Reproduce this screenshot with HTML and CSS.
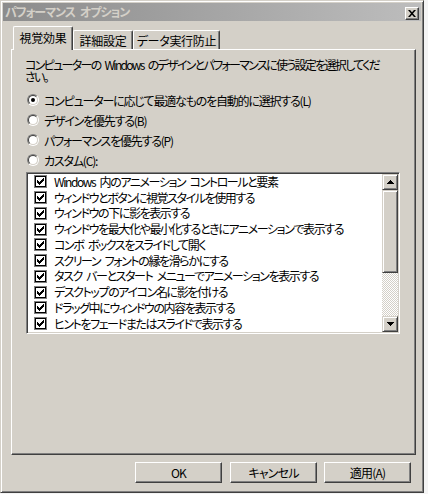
FILE: index.html
```html
<!DOCTYPE html>
<html lang="ja">
<head>
<meta charset="utf-8">
<title>パフォーマンス オプション</title>
<link rel="stylesheet" href="styles.css">
</head>
<body>
<div class="dialog">
  <div class="titlebar">
    <span class="title">パフォーマンス オプション</span>
    <span class="close">
      <svg width="8" height="7" viewBox="0 0 8 7"><path d="M0 0h2l2 2.2L6 0h2L5 3.5 8 7H6L4 4.8 2 7H0l3-3.5z" fill="#000"/></svg>
    </span>
  </div>
  <div class="content">
    <div class="tabs">
      <div class="tab sel">視覚効果</div>
      <div class="tab t2">詳細設定</div>
      <div class="tab t3">データ実行防止</div>
    </div>
    <div class="panel">
      <p class="desc">コンピューターの Windows のデザインとパフォーマンスに使う設定を選択してくだ<br>さい。</p>
      <div class="radios">
        <div class="rrow"><span class="radio"><i><b></b></i></span><span>コンピューターに応じて最適なものを自動的に選択する(L)</span></div>
        <div class="rrow"><span class="radio"><i></i></span><span>デザインを優先する(B)</span></div>
        <div class="rrow"><span class="radio"><i></i></span><span>パフォーマンスを優先する(P)</span></div>
        <div class="rrow"><span class="radio"><i></i></span><span>カスタム(C):</span></div>
      </div>
      <div class="listbox">
        <div class="items">
          <div class="item"><span class="cb"><svg width="7" height="7" viewBox="0 0 7 7"><path d="M0 2h1v3H0zM1 3h1v3H1zM2 4h1v3H2zM3 3h1v3H3zM4 2h1v3H4zM5 1h1v3H5zM6 0h1v3H6z" fill="#000"/></svg></span><span>Windows 内のアニメーション コントロールと要素</span></div>
          <div class="item"><span class="cb"><svg width="7" height="7" viewBox="0 0 7 7"><path d="M0 2h1v3H0zM1 3h1v3H1zM2 4h1v3H2zM3 3h1v3H3zM4 2h1v3H4zM5 1h1v3H5zM6 0h1v3H6z" fill="#000"/></svg></span><span>ウィンドウとボタンに視覚スタイルを使用する</span></div>
          <div class="item"><span class="cb"><svg width="7" height="7" viewBox="0 0 7 7"><path d="M0 2h1v3H0zM1 3h1v3H1zM2 4h1v3H2zM3 3h1v3H3zM4 2h1v3H4zM5 1h1v3H5zM6 0h1v3H6z" fill="#000"/></svg></span><span>ウィンドウの下に影を表示する</span></div>
          <div class="item"><span class="cb"><svg width="7" height="7" viewBox="0 0 7 7"><path d="M0 2h1v3H0zM1 3h1v3H1zM2 4h1v3H2zM3 3h1v3H3zM4 2h1v3H4zM5 1h1v3H5zM6 0h1v3H6z" fill="#000"/></svg></span><span>ウィンドウを最大化や最小化するときにアニメーションで表示する</span></div>
          <div class="item"><span class="cb"><svg width="7" height="7" viewBox="0 0 7 7"><path d="M0 2h1v3H0zM1 3h1v3H1zM2 4h1v3H2zM3 3h1v3H3zM4 2h1v3H4zM5 1h1v3H5zM6 0h1v3H6z" fill="#000"/></svg></span><span>コンボ ボックスをスライドして開く</span></div>
          <div class="item"><span class="cb"><svg width="7" height="7" viewBox="0 0 7 7"><path d="M0 2h1v3H0zM1 3h1v3H1zM2 4h1v3H2zM3 3h1v3H3zM4 2h1v3H4zM5 1h1v3H5zM6 0h1v3H6z" fill="#000"/></svg></span><span>スクリーン フォントの縁を滑らかにする</span></div>
          <div class="item"><span class="cb"><svg width="7" height="7" viewBox="0 0 7 7"><path d="M0 2h1v3H0zM1 3h1v3H1zM2 4h1v3H2zM3 3h1v3H3zM4 2h1v3H4zM5 1h1v3H5zM6 0h1v3H6z" fill="#000"/></svg></span><span>タスク バーとスタート メニューでアニメーションを表示する</span></div>
          <div class="item"><span class="cb"><svg width="7" height="7" viewBox="0 0 7 7"><path d="M0 2h1v3H0zM1 3h1v3H1zM2 4h1v3H2zM3 3h1v3H3zM4 2h1v3H4zM5 1h1v3H5zM6 0h1v3H6z" fill="#000"/></svg></span><span>デスクトップのアイコン名に影を付ける</span></div>
          <div class="item"><span class="cb"><svg width="7" height="7" viewBox="0 0 7 7"><path d="M0 2h1v3H0zM1 3h1v3H1zM2 4h1v3H2zM3 3h1v3H3zM4 2h1v3H4zM5 1h1v3H5zM6 0h1v3H6z" fill="#000"/></svg></span><span>ドラッグ中にウィンドウの内容を表示する</span></div>
          <div class="item"><span class="cb"><svg width="7" height="7" viewBox="0 0 7 7"><path d="M0 2h1v3H0zM1 3h1v3H1zM2 4h1v3H2zM3 3h1v3H3zM4 2h1v3H4zM5 1h1v3H5zM6 0h1v3H6z" fill="#000"/></svg></span><span>ヒントをフェードまたはスライドで表示する</span></div>
        </div>
        <div class="scrollbar">
          <div class="sbtn"><svg width="7" height="4" viewBox="0 0 7 4"><path d="M3 0h1v1h1v1h1v1h1v1H0V3h1V2h1V1h1z" fill="#000"/></svg></div>
          <div class="thumb"></div>
          <div class="track"></div>
          <div class="sbtn"><svg width="7" height="4" viewBox="0 0 7 4"><path d="M0 0h7v1H6v1H5v1H4v1H3V3H2V2H1V1H0z" fill="#000"/></svg></div>
        </div>
      </div>
    </div>
    <div class="buttons">
      <div class="btn ok">OK</div>
      <div class="btn">キャンセル</div>
      <div class="btn">適用(A)</div>
    </div>
  </div>
</div>
</body>
</html>
```

FILE: styles.css
```css
html, body {
  margin: 0;
  padding: 0;
}
body {
  width: 428px;
  height: 494px;
  background: #f4f4f4;
  font-family: "Noto Sans CJK JP", sans-serif;
  font-size: 12px;
  color: #000;
  overflow: hidden;
}
.dialog {
  width: 424px;
  height: 493px;
  box-sizing: border-box;
  background: #d4d0c8;
  border: 1px solid;
  border-color: #d4d0c8 #404040 #404040 #d4d0c8;
  box-shadow: inset 1px 1px 0 #fff, inset -1px -1px 0 #808080;
  padding: 2px;
  display: flex;
  flex-direction: column;
}
.titlebar {
  height: 18px;
  background: linear-gradient(to right, #8c8c8c, #bdbdbd);
  display: flex;
  align-items: center;
  justify-content: space-between;
  padding: 0 2px 0 2px;
}
.title {
  color: #d4d0c8;
  font-weight: bold;
  font-size: 12px;
  line-height: 18px;
  letter-spacing: -1px;
  word-spacing: 3px;
  font-feature-settings: "palt" 1;
}
.close {
  width: 14px;
  height: 13px;
  box-sizing: border-box;
  background: #d4d0c8;
  border: 1px solid;
  border-color: #fff #404040 #404040 #fff;
  box-shadow: inset -1px -1px 0 #808080;
  display: flex;
  align-items: center;
  justify-content: center;
  margin-top: 3px;
}
.close svg { display: block; margin: 0 1px 1px 0; }
.content {
  flex: 1;
  display: flex;
  flex-direction: column;
  padding: 5px 5px 0 8px;
}
.tabs {
  display: flex;
  align-items: flex-end;
  height: 23px;
  padding-left: 2px;
}
.tab {
  box-sizing: border-box;
  height: 19px;
  border-top: 1px solid #fff;
  border-left: 1px solid #fff;
  border-right: 1px solid #404040;
  box-shadow: inset -1px 0 0 #808080;
  border-radius: 2px 2px 0 0;
  display: flex;
  align-items: center;
  justify-content: center;
  line-height: 12px;
  letter-spacing: -0.3px;
  font-feature-settings: "palt" 1;
  padding-top: 1px;
}
.tab.sel {
  width: 60px;
  height: 24px;
  margin-bottom: -1px;
  position: relative;
  z-index: 1;
  background: #d4d0c8;
  padding-top: 0;
  padding-bottom: 2px;
}
.tab.t2 { width: 60px; }
.tab.t3 { width: 87px; }
.panel {
  width: 405px;
  height: 406px;
  box-sizing: border-box;
  border: 1px solid;
  border-color: #fff #404040 #404040 #fff;
  box-shadow: inset -1px -1px 0 #808080;
  padding: 9px 0 0 13px;
}
.desc {
  margin: 0;
  line-height: 12px;
  letter-spacing: -1.7px;
  word-spacing: 3px;
  font-feature-settings: "palt" 1;
  white-space: nowrap;
}
.radios {
  margin-top: 7px;
}
.rrow {
  height: 20px;
  display: flex;
  align-items: center;
  padding-left: 2px;
  gap: 5px;
  letter-spacing: -1.2px;
  font-feature-settings: "palt" 1;
  white-space: nowrap;
}
.radio {
  width: 12px;
  height: 12px;
  box-sizing: border-box;
  border-radius: 50%;
  border: 1px solid;
  border-color: #808080 #fff #fff #808080;
  flex: none;
}
.radio i {
  display: flex;
  align-items: center;
  justify-content: center;
  width: 100%;
  height: 100%;
  box-sizing: border-box;
  border-radius: 50%;
  border: 1px solid;
  border-color: #404040 #d4d0c8 #d4d0c8 #404040;
  background: #fff;
}
.radio b {
  width: 4px;
  height: 4px;
  border-radius: 50%;
  background: #000;
}
.listbox {
  margin: 2px 0 0 1px;
  width: 374px;
  height: 162px;
  box-sizing: border-box;
  border: 1px solid;
  border-color: #808080 #fff #fff #808080;
  box-shadow: inset 1px 1px 0 #404040, inset -1px -1px 0 #d4d0c8;
  padding: 1px;
  display: flex;
  background: #fff;
}
.items {
  flex: 1;
  overflow: hidden;
}
.item {
  height: 15.75px;
  display: flex;
  align-items: center;
  padding-left: 6px;
  gap: 7px;
  white-space: nowrap;
  letter-spacing: -1.4px;
  word-spacing: 3px;
  font-feature-settings: "palt" 1;
  line-height: 12px;
}
.cb {
  width: 13px;
  height: 13px;
  box-sizing: border-box;
  border: 1px solid #808080;
  box-shadow: inset 1px 1px 0 #000, inset -1px -1px 0 #000;
  background: #fff;
  display: flex;
  align-items: center;
  justify-content: center;
  flex: none;
}
.cb svg { display: block; }
.scrollbar {
  width: 16px;
  display: flex;
  flex-direction: column;
}
.sbtn, .thumb {
  box-sizing: border-box;
  background: #d4d0c8;
  border: 1px solid;
  border-color: #d4d0c8 #404040 #404040 #d4d0c8;
  box-shadow: inset 1px 1px 0 #fff, inset -1px -1px 0 #808080;
}
.sbtn {
  height: 16px;
  display: flex;
  align-items: center;
  justify-content: center;
}
.thumb { height: 83px; }
.track {
  flex: 1;
  background-color: #fff;
  background-image: conic-gradient(#d4d0c8 25%, #fff 0 50%, #d4d0c8 0 75%, #fff 0);
  background-size: 2px 2px;
}
.buttons {
  display: flex;
  justify-content: flex-end;
  gap: 7px;
  margin-top: 7px;
  padding-right: 5px;
}
.btn {
  width: 87px;
  height: 21px;
  box-sizing: border-box;
  background: #d4d0c8;
  border: 1px solid;
  border-color: #fff #404040 #404040 #fff;
  box-shadow: inset -1px -1px 0 #808080;
  display: flex;
  align-items: center;
  justify-content: center;
  line-height: 12px;
  letter-spacing: -0.8px;
  font-feature-settings: "palt" 1;
}
.btn.ok { margin-right: 1px; }
```
